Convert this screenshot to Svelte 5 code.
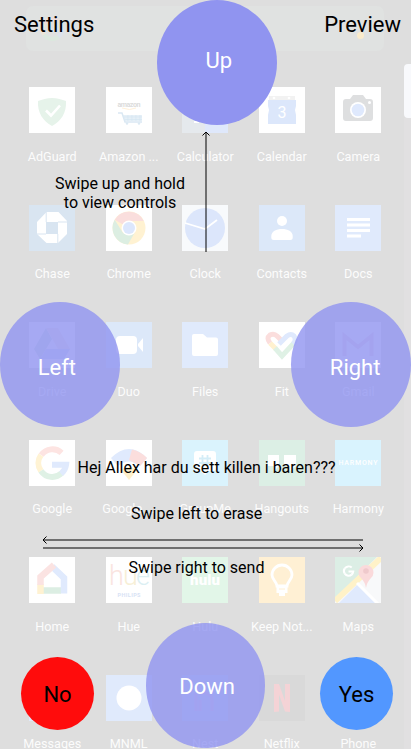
<script>
  const gLogo = (s, t) => `<g transform="${t}" fill="none" stroke-width="5.2">
    <path stroke="${s[0]}" d="M-9.5 -7A12 12 0 0 1 8.5 -9"/>
    <path stroke="${s[1]}" d="M-9.8 7A12 12 0 0 1 -9.8 -7"/>
    <path stroke="${s[2]}" d="M8.5 9A12 12 0 0 1 -9.8 7"/>
    <path stroke="${s[3]}" d="M0 1.5H12.5A12 12 0 0 1 8 9.5"/></g>`;
  const pale = ['#fde4e2', '#fff3d4', '#dff1e5', '#e0eafd'];

  const apps = [
    { name: 'AdGuard', bg: '#fff', art: '<path fill="#e6f3ea" d="M23 11c5 0 10 1.500 14 3 .7 12-5 20-14 25C14 34 8.300 26 9 14c4-1.500 9-3 14-3z"/><path d="M17 23.500l5 5 9-10" fill="none" stroke="#fff" stroke-width="2.600"/>' },
    { name: 'Amazon ...', bg: '#fff', art: '<text x="23" y="20" text-anchor="middle" font-size="7.200" font-weight="700" textLength="23" fill="#dcdcdc">amazon</text><path d="M16 21q8 3 14 0" fill="none" stroke="#fff0d8"/><path d="M17 28h19v6H19z" fill="#e6f0f7"/><path d="M12 26h4l3 9h17" fill="none" stroke="#dae8f3" stroke-width="1.500"/><path d="M18 30h18M19 32.500h17M22 28v6m4-6v6m4-6v6m4-6v6" stroke="#d6e6f2" stroke-width=".7"/><circle cx="21" cy="36.500" r="1.200" fill="#dce9f3"/><circle cx="33" cy="36.500" r="1.200" fill="#dce9f3"/>' },
    { name: 'Calculator', bg: 'linear-gradient(90deg,#e5e9ed 50%,#dfe8fb 50%)', art: '<path d="M12 35h5" stroke="#fff" stroke-width="2"/>' },
    { name: 'Calendar', bg: '#fff', art: '<path d="M10 9h26v6H10z" fill="#f2f2f2"/><path d="M9 13h28v6l-1 4 1 5v9H9v-9l1-5-1-4z" fill="#dce7fb"/><circle cx="15" cy="11" r="1.300" fill="#fff"/><circle cx="30" cy="11" r="1.300" fill="#fff"/><text x="23" y="31" text-anchor="middle" font-size="16" fill="#fff">3</text>' },
    { name: 'Camera', bg: '#fff', art: '<path fill="#dedfe0" d="M11 12h4l3-4h10l3 4h4a3 3 0 0 1 3 3v16a3 3 0 0 1-3 3H11a3 3 0 0 1-3-3V15a3 3 0 0 1 3-3z"/><circle cx="23" cy="23" r="8" fill="#fff"/><circle cx="23" cy="23" r="6.300" fill="#dfe9fd"/><circle cx="34.500" cy="15.500" r="1.500" fill="#fff"/>' },
    { name: 'Chase', bg: '#d9e5f1', art: '<path fill="#fff" d="M17.500 7h12l8.500 9v13l-9 9H17.500L8 29V17z"/><path fill="#d9e5f1" d="M17 17h12v12H17z"/><path d="M17.200 7v10M38 17H29M28.800 38V29M8 29h9" stroke="#d9e5f1" stroke-width="1"/>' },
    { name: 'Chrome', bg: '#fff', art: '<circle cx="23" cy="23" r="16.500" fill="#fff2d2"/><path fill="#fadedd" d="M23 23L8.700 14.800A16.500 16.500 0 0 1 37.800 16H23z"/><path fill="#dceee2" d="M8.700 14.800L17 28l6 2-1 9.500A16.500 16.500 0 0 1 8.700 14.800z"/><path fill="#dceee2" d="M29 27L22 39.500 20 29z"/><circle cx="23" cy="23" r="7.500" fill="#fff"/><circle cx="23" cy="23" r="6" fill="#dce7fd"/>' },
    { name: 'Clock', bg: '#f8fafc', art: '<circle cx="23" cy="23" r="20" fill="#dce6fb"/><path d="M3 18l20 6 12-9" fill="none" stroke="#fff" stroke-width="1.800"/>' },
    { name: 'Contacts', bg: '#dce8f9', art: '<circle cx="23" cy="16" r="5" fill="#fff"/><path fill="#fff" d="M12.300 31c0-4.500 5-7 10.700-7s10.700 2.500 10.700 7v1.500q0 2.500-2.500 2.500H14.800q-2.500 0-2.500-2.500z"/>' },
    { name: 'Docs', bg: '#e0eafc', art: '<path d="M12 14.500h23M12 20h23M12 25.500h23M12 31h14" stroke="#fff" stroke-width="2.800"/>' },
    { name: 'Drive', bg: '#fff', art: '<path fill="#dcebe3" d="M17 6L5 27l6 10 12-20z"/><path fill="#fbf0ea" d="M17 6h12l12 21H29z"/><path fill="#dbe3f8" d="M17 27h24l-6 10H11z"/>' },
    { name: 'Duo', bg: '#dce8f9', art: '<rect x="10" y="14" width="21" height="18" rx="4" fill="#fff"/><path fill="#fff" d="M32 22l5-6v14l-5-6z"/>' },
    { name: 'Files', bg: '#e0eafc', art: '<path fill="#fff" d="M12 12h9l4 3.500h9a2 2 0 0 1 2 2V32a2 2 0 0 1-2 2H12a2 2 0 0 1-2-2V14a2 2 0 0 1 2-2z"/>' },
    { name: 'Fit', bg: '#fff', art: '<g fill="none" stroke-width="5"><path stroke="#fff1cf" d="M11 21l6 6"/><path stroke="#dff1e5" d="M16 26l7 8 12-13"/><path stroke="#fbdedd" d="M11 21q-4-5 0-8 4-2 7 1l6 6"/><path stroke="#dfe9fd" d="M20 22l8-8q4-3 7 0 3 4-1 8"/></g>' },
    { name: 'Gmail', bg: '#fff', art: '<path d="M9.500 34V14L23 25l13.500-11v20" fill="none" stroke="#f3e2ea" stroke-width="4"/>' },
    { name: 'Google', bg: '#fff', art: gLogo(pale, 'translate(23 23) scale(1.13)') },
    { name: 'Google ...', bg: '#fff', art: '<path d="M5 18Q23 0 41 18L34 26Q23 17 12 26z" fill="#e0eafd"/><path d="M26 9.500q9 2 15 8.500l-7 8-11-6z" fill="#fbdedd"/><path d="M15 30q8-6 16 0l-8 10z" fill="#fff0ca"/>' },
    { name: 'GroupMe', bg: '#daf3fd', art: '<path fill="#fff" d="M15 11h16q3 0 3 3v14q0 3-3 3h-4l-4 4-4-4h-4q-3 0-3-3V14q0-3 3-3z"/><path d="M20.500 15v11m5-11v11M17 18.500h12m-12 4.500h12" stroke="#d4edf7" stroke-width="1.800"/>' },
    { name: 'Hangouts', bg: '#dcefe5', art: '<path fill="#fff" d="M9 15h11v11l-5 5v-5H9zM25 15h12v11l-6 5v-5h-6z"/>' },
    { name: 'Harmony', bg: '#d9f3fe', art: '<text x="23" y="25" text-anchor="middle" font-size="7" textLength="39" font-weight="500" fill="#fff">HARMONY</text>' },
    { name: 'Home', bg: '#fff', art: '<g fill="none" stroke-width="6.500"><path stroke="#dceee3" d="M14 33.500h18"/><path stroke="#fff2d2" d="M11.500 37V27"/><path stroke="#e0eafd" d="M35 36.500V21L23 9.500"/><path stroke="#fbe3e2" d="M11.500 28v-8L25 8"/></g>' },
    { name: 'Hue', bg: '#fff', art: '<g font-size="27" font-weight="300"><text x="3" y="28" fill="#fae4e0">h</text><text x="17" y="28" fill="#f7efd6">u</text><text x="30" y="28" fill="#dceff3">e</text></g><text x="23" y="40" text-anchor="middle" font-size="5.500" textLength="23" font-weight="700" fill="#d8e3f5">PHILIPS</text>' },
    { name: 'Hulu', bg: '#e2f6e8', art: '<text x="23" y="28" text-anchor="middle" font-size="15" textLength="30" font-weight="900" fill="#fff">hulu</text>' },
    { name: 'Keep Not...', bg: '#fff0d4', art: '<path d="M18 29c0-4-5-6-5-11a10 10 0 0 1 20 0c0 5-5 7-5 11z" fill="none" stroke="#fff" stroke-width="2.800"/><path d="M17.500 29h11v7h-2.500v3h-6v-3h-2.500z" fill="#fff"/><path d="M20 32h6" stroke="#fff0d4"/>' },
    { name: 'Maps', bg: '#f8f9fa', art: '<path fill="#dceee5" d="M0 0h42L0 42z"/><path fill="#e0eafd" d="M4 46L23 27l19 19z"/><path d="M0 44L46 1" stroke="#fff2c8" stroke-width="6"/><path d="M22 26l22 22" stroke="#fff" stroke-width="3"/><path fill="#fadadb" d="M31 31q-1-6-5-10a7.500 7.500 0 1 1 10 0q-4 4-5 10z"/><circle cx="31" cy="14" r="2.800" fill="#efc9cc"/>' + gLogo(['#fff', '#fff', '#fff', '#fff'], 'translate(13.500 14) scale(.38)') },
    { name: 'Messages', bg: '#e0eafc', art: '' },
    { name: 'MNML', bg: '#e0eafc', art: '<circle cx="23" cy="23" r="12.500" fill="#fff"/>' },
    { name: 'Nest', bg: '#d8eafa', art: '<path d="M14 36V18h4q12-2 12 8v10M18 36V25" fill="none" stroke="#ecdcf0" stroke-width="3.500"/>' },
    { name: 'Netflix', bg: '#d9d9d9', art: '<path fill="#f4d3d6" d="M15 9h5l6 17V9h5v28l-5-.5-6-17V36.500l-5 .5z"/>' },
    { name: 'Phone', bg: 'transparent', art: '' },
  ];
</script>

<main class="phone">
  <div class="search">
    <svg width="32" height="32" viewBox="-16 -16 32 32">{@html gLogo(['#eedddc', '#ece5d7', '#dbe8de', '#dce2ec'], 'scale(.8)')}</svg>
    <i></i>
  </div>
  <div class="rail"></div>
  <div class="thumb"></div>

  <section class="apps">
    {#each apps as app}
      <div class="app">
        <div class="tile" style="background: {app.bg}">
          <svg width="46" height="46" viewBox="0 0 46 46">{@html app.art}</svg>
        </div>
        <span>{app.name}</span>
      </div>
    {/each}
  </section>

  <div class="pad up"><span>Up</span></div>
  <div class="pad left"><span>Left</span></div>
  <div class="pad right"><span>Right</span></div>
  <div class="pad down"><span>Down</span></div>
  <div class="answer no">No</div>
  <div class="answer yes">Yes</div>

  <svg class="arrows" width="411" height="749" viewBox="0 0 411 749" fill="none" stroke="#000">
    <path d="M206 252V132M43 540H363M43 548H363" />
    <path d="M202.500 135.500L206 132l3.500 3.500M46.500 536.500L43 540l3.500 3.500M359.500 544.500L363 548l-3.500 3.500" />
  </svg>

  <div class="link settings">Settings</div>
  <div class="link preview">Preview</div>
  <div class="note hold">Swipe up and hold<br />to view controls</div>
  <div class="note message">Hej Allex har du sett killen i baren???</div>
  <div class="note erase">Swipe left to erase</div>
  <div class="note send">Swipe right to send</div>
</main>

<style>
  .phone {
    position: relative;
    width: 411px;
    height: 749px;
    overflow: hidden;
    background: #dedede;
    font-family: Roboto, sans-serif;
    color: #000;
  }
  .search {
    position: absolute;
    left: 26px;
    top: 6px;
    width: 358px;
    height: 45px;
    border-radius: 7px;
    background: #e0e2e1;
  }
  .search svg {
    position: absolute;
    left: 10px;
    top: 7px;
  }
  .search i {
    position: absolute;
    left: 331px;
    top: 26px;
    width: 7px;
    height: 7px;
    border-radius: 50%;
    background: #faebcb;
  }
  .rail {
    position: absolute;
    left: 404px;
    top: 118px;
    width: 7px;
    bottom: 0;
    background: #e1e0e1;
  }
  .thumb {
    position: absolute;
    left: 404px;
    top: 64px;
    width: 12px;
    height: 54px;
    border-radius: 4px;
    background: #f8f9fc;
  }
  .apps {
    position: relative;
    display: grid;
    grid-template-columns: repeat(5, 76.5px);
    grid-auto-rows: 117.6px;
    padding: 87px 0 0 14px;
  }
  .app {
    display: flex;
    flex-direction: column;
    align-items: center;
    gap: 15.5px;
  }
  .tile {
    width: 46px;
    height: 46px;
  }
  .tile svg {
    display: block;
  }
  .app span {
    font-size: 12.6px;
    line-height: 16px;
    color: #fcfcfc;
    white-space: nowrap;
  }
  .pad {
    position: absolute;
    box-sizing: border-box;
    display: flex;
    align-items: center;
    justify-content: center;
    width: 119.7px;
    height: 125px;
    border-radius: 50%;
    background: rgba(144, 148, 240, 0.8);
    color: #fff;
    font-size: 22px;
    line-height: 26px;
  }
  .up {
    left: 157px;
    top: 0;
    background: #9094f0;
    padding: 0 0 4px 4px;
  }
  .left {
    left: 0;
    top: 302px;
    padding: 6px 6px 0 0;
  }
  .right {
    left: 291.3px;
    top: 302px;
    padding: 6px 0 0 8px;
  }
  .down {
    left: 145.7px;
    top: 623px;
    padding: 2px 0 0 3px;
  }
  .answer {
    position: absolute;
    top: 657px;
    width: 73px;
    height: 73px;
    border-radius: 50%;
    font-size: 22px;
    line-height: 75px;
    text-align: center;
  }
  .no {
    left: 21px;
    background: #ff0c0c;
  }
  .yes {
    left: 320px;
    background: #5297ff;
  }
  .arrows {
    position: absolute;
    left: 0;
    top: 0;
  }
  .link {
    position: absolute;
    top: 12px;
    font-size: 22px;
    line-height: 26px;
  }
  .settings {
    left: 14px;
  }
  .preview {
    right: 10px;
  }
  .note {
    position: absolute;
    font-size: 16px;
    line-height: 19px;
    text-align: center;
    white-space: nowrap;
  }
  .hold {
    left: 55px;
    top: 174px;
    width: 130px;
  }
  .message {
    left: 77.5px;
    top: 458px;
  }
  .erase {
    left: 131px;
    top: 504px;
  }
  .send {
    left: 128.5px;
    top: 558px;
  }
</style>
